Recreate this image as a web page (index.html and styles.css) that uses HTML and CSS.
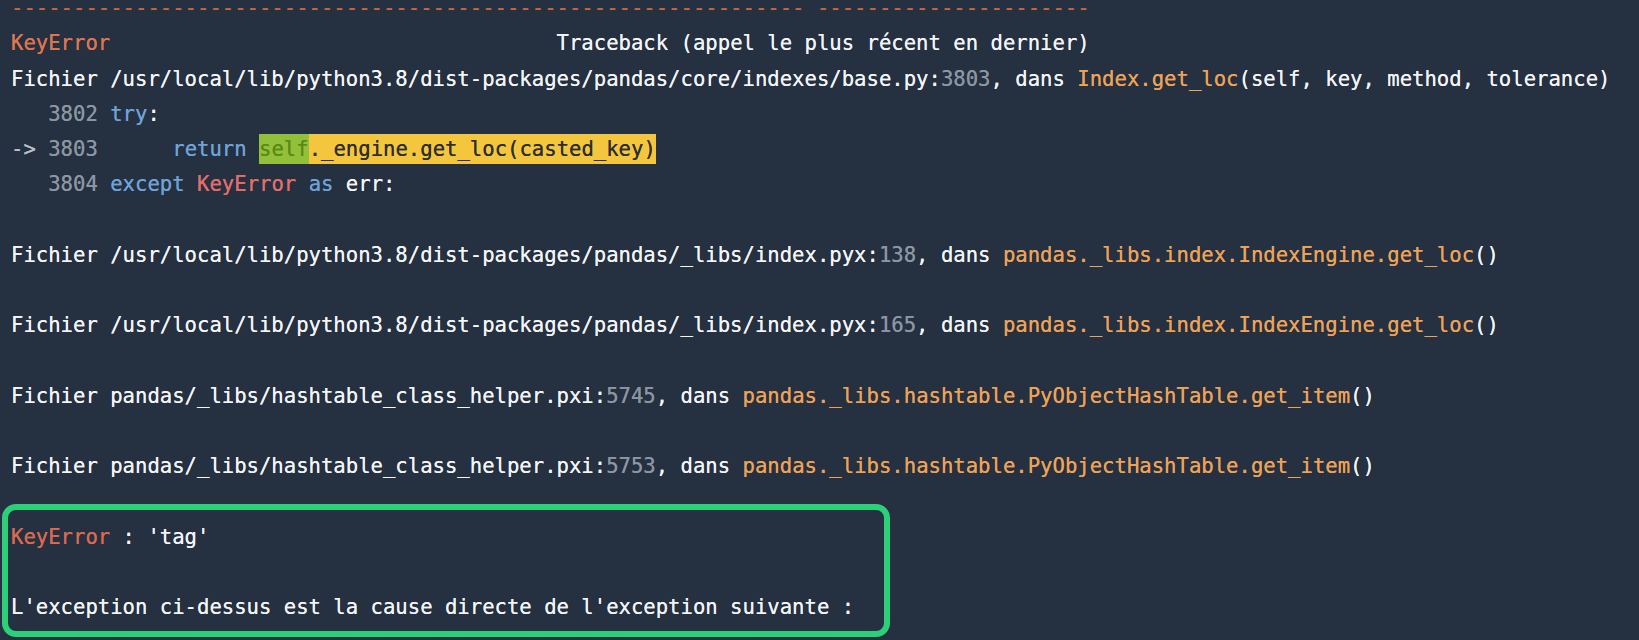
FILE: index.html
```html
<!DOCTYPE html>
<html lang="fr">
<head>
<meta charset="utf-8">
<title>Traceback</title>
<link rel="stylesheet" href="styles.css">
</head>
<body>
<div class="term">
<div class="ln dash">---------------------------------------------------------------- ----------------------</div>
<div class="ln"><span class="err">KeyError</span>                                    Traceback (appel le plus récent en dernier)</div>
<div class="ln">Fichier /usr/local/lib/python3.8/dist-packages/pandas/core/indexes/base.py:<span class="num">3803</span>, dans <span class="fn">Index.get_loc</span>(self, key, method, tolerance)</div>
<div class="ln">   <span class="num">3802</span> <span class="kw">try</span>:</div>
<div class="ln"><span class="arrow">-&gt;</span> <span class="num">3803</span>      <span class="kw">return</span> <span class="hl-self">self</span><span class="hl">._engine.get_loc(casted_key)</span></div>
<div class="ln">   <span class="num">3804</span> <span class="kw">except</span> <span class="exc">KeyError</span> <span class="kw">as</span> err:</div>
<div class="ln"> </div>
<div class="ln">Fichier /usr/local/lib/python3.8/dist-packages/pandas/_libs/index.pyx:<span class="num">138</span>, dans <span class="fn">pandas._libs.index.IndexEngine.get_loc</span>()</div>
<div class="ln"> </div>
<div class="ln">Fichier /usr/local/lib/python3.8/dist-packages/pandas/_libs/index.pyx:<span class="num">165</span>, dans <span class="fn">pandas._libs.index.IndexEngine.get_loc</span>()</div>
<div class="ln"> </div>
<div class="ln">Fichier pandas/_libs/hashtable_class_helper.pxi:<span class="num">5745</span>, dans <span class="fn">pandas._libs.hashtable.PyObjectHashTable.get_item</span>()</div>
<div class="ln"> </div>
<div class="ln">Fichier pandas/_libs/hashtable_class_helper.pxi:<span class="num">5753</span>, dans <span class="fn">pandas._libs.hashtable.PyObjectHashTable.get_item</span>()</div>
<div class="ln"> </div>
<div class="callout">
<div class="ln"><span class="err2">KeyError</span> : 'tag'</div>
<div class="ln"> </div>
<div class="ln">L'exception ci-dessus est la cause directe de l'exception suivante :</div>
</div>
</div>
</body>
</html>
```
FILE: styles.css
```css
html, body {
  margin: 0;
  padding: 0;
  height: 100%;
  overflow: hidden;
  background: #253041;
}

.term {
  margin-top: -9px;
  padding-left: 11px;
  font-family: "DejaVu Sans Mono", monospace;
  font-size: 20.6px;
  line-height: 35.25px;
  color: #f2f4f6;
  text-shadow: 0 0 0.4px currentColor;
}

.ln {
  white-space: pre;
  height: 35.25px;
}

.dash { color: #c8643f; }
.err { color: #df7550; }
.err2 { color: #d96a52; }
.num { color: #8b96a2; }
.fn { color: #eea257; }
.kw { color: #6fa3d8; }
.exc { color: #e36d6a; }
.arrow { color: #b9c0c8; }

.hl-self {
  background: #93c03a;
  color: #5b8a17;
  padding: 3px 0;
}

.hl {
  background: #f4c63e;
  color: #2d2f33;
  padding: 3px 0;
}

.callout {
  width: fit-content;
  margin: -16px 0 0 -9px;
  padding: 10px 30px 5px 3px;
  border: 6px solid #2bd078;
  border-radius: 14px;
}
```
